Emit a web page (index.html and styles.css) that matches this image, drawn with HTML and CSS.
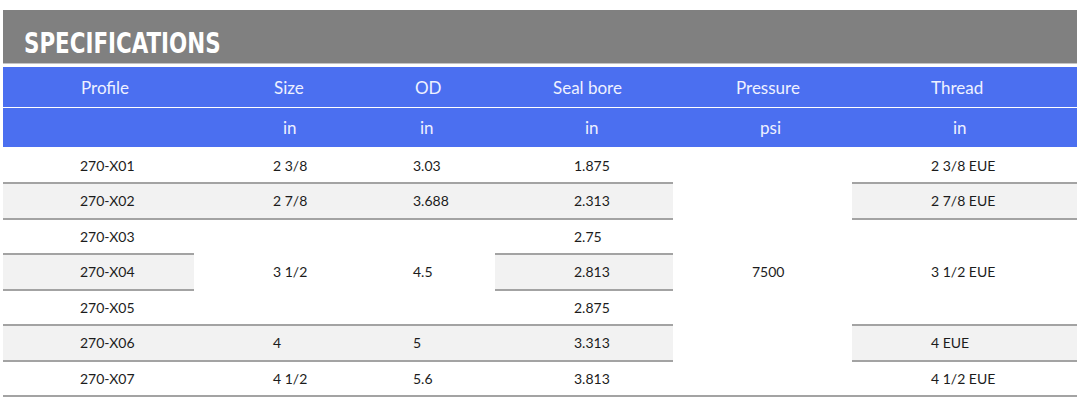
FILE: index.html
```html
<!DOCTYPE html>
<html>
<head>
<meta charset="utf-8">
<link rel="stylesheet" href="styles.css">
</head>
<body>
<div class="sheet">
  <div class="title"><h1>SPECIFICATIONS</h1></div>
  <table class="specs">
    <colgroup>
      <col class="c1"><col class="c2"><col class="c3"><col class="c4"><col class="c5"><col class="c6">
    </colgroup>
    <thead>
      <tr class="hrow names">
        <th>Profile</th><th>Size</th><th>OD</th><th>Seal bore</th><th>Pressure</th><th>Thread</th>
      </tr>
      <tr class="hrow units">
        <th></th><th>in</th><th>in</th><th>in</th><th>psi</th><th>in</th>
      </tr>
    </thead>
    <tbody>
      <tr>
        <td>270-X01</td><td>2 3/8</td><td>3.03</td><td>1.875</td>
        <td rowspan="7" class="merged">7500</td>
        <td>2 3/8 EUE</td>
      </tr>
      <tr class="alt">
        <td>270-X02</td><td>2 7/8</td><td>3.688</td><td>2.313</td><td>2 7/8 EUE</td>
      </tr>
      <tr>
        <td>270-X03</td>
        <td rowspan="3" class="merged">3 1/2</td>
        <td rowspan="3" class="merged">4.5</td>
        <td>2.75</td>
        <td rowspan="3" class="merged">3 1/2 EUE</td>
      </tr>
      <tr class="alt">
        <td>270-X04</td><td>2.813</td>
      </tr>
      <tr>
        <td>270-X05</td><td>2.875</td>
      </tr>
      <tr class="alt">
        <td>270-X06</td><td>4</td><td>5</td><td>3.313</td><td>4 EUE</td>
      </tr>
      <tr>
        <td>270-X07</td><td>4 1/2</td><td>5.6</td><td>3.813</td><td>4 1/2 EUE</td>
      </tr>
    </tbody>
  </table>
</div>
</body>
</html>
```

FILE: styles.css
```css
html, body {
  margin: 0;
  padding: 0;
  background: #ffffff;
}

.sheet {
  margin: 10px 0 0 3px;
  width: 1074px;
  font-family: Lato, "Open Sans", "Liberation Sans", sans-serif;
}

.title {
  height: 53px;
  background: #808080;
  border-bottom: 1px solid #c4c4c4;
  margin-bottom: 3px;
  display: flex;
  align-items: flex-end;
  padding-left: 21px;
}

.title h1 {
  margin: 0 0 4px 0;
  font-family: "DejaVu Sans Condensed", "Liberation Sans Narrow", sans-serif;
  font-weight: bold;
  font-size: 28px;
  line-height: 30px;
  color: #ffffff;
  letter-spacing: 0;
  transform-origin: left bottom;
  transform: scaleX(0.85);
}

.specs {
  width: 1074px;
  border-collapse: collapse;
  table-layout: fixed;
}

.c1 { width: 191px; }
.c2 { width: 140px; }
.c3 { width: 161px; }
.c4 { width: 178px; }
.c5 { width: 179px; }
.c6 { width: 225px; }

.hrow th {
  background: #4b6ff0;
  color: #eef1ff;
  font-weight: normal;
  font-size: 17px;
  text-align: left;
  padding: 0;
}

.names th {
  height: 40px;
  border-bottom: 1px solid #ffffff;
}

.units th {
  height: 39px;
  border-bottom: 1px solid #ffffff;
}

.names th:nth-child(1) { padding-left: 78px; }
.names th:nth-child(2) { padding-left: 80px; }
.names th:nth-child(3) { padding-left: 81px; }
.names th:nth-child(4) { padding-left: 58px; }
.names th:nth-child(5) { padding-left: 63px; }
.names th:nth-child(6) { padding-left: 79px; }

.units th:nth-child(2) { padding-left: 89px; }
.units th:nth-child(3) { padding-left: 86px; }
.units th:nth-child(4) { padding-left: 90px; }
.units th:nth-child(5) { padding-left: 87px; }
.units th:nth-child(6) { padding-left: 101px; }

.specs tbody tr {
  height: 35.5px;
}

.specs td {
  padding: 0 0 0 79px;
  font-size: 14px;
  color: #1c1c1c;
  text-align: left;
  vertical-align: middle;
  border-bottom: 2px solid #a3a3a3;
  background: #ffffff;
}

.specs td:first-child {
  padding-left: 77px;
}

.specs tr.alt td {
  background: #f2f2f2;
}

.specs tr.alt td.merged,
.specs td.merged {
  background: #ffffff;
}
```
